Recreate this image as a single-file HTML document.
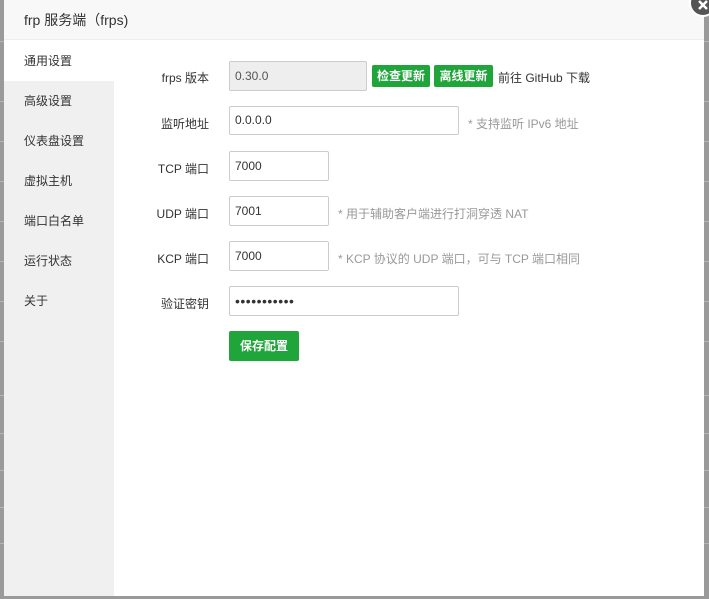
<!DOCTYPE html><html><head><meta charset="utf-8"><style>
body{margin:0;width:709px;height:599px;overflow:hidden;background:#9a9a9a;font-family:"Liberation Sans","Noto Sans CJK SC",sans-serif;font-size:12px;color:#333;position:relative}
.bgl{position:absolute;left:0;width:709px;height:1px;background:#b5b5b5}
.dlg{position:absolute;left:4px;top:0;width:700px;height:596px;background:#fff}
.hd{position:absolute;left:0;top:0;width:700px;height:40px;background:#f8f8f8;border-bottom:1px solid #eee;font-size:14px;line-height:40px;padding-left:20px;box-sizing:border-box}
.sb{position:absolute;left:0;top:41px;width:110px;height:555px;background:#f0f0f0}
.sb div{height:40px;line-height:40px;padding-left:20px;font-size:12px}
.sb div.on{background:#fff}
.ab{position:absolute}
.lbl{position:absolute;width:100px;text-align:right;left:105px}
.in{position:absolute;left:225px;border:1px solid #ccc;border-radius:2px;box-sizing:border-box;padding-left:5px;font-size:12px}
.btn{position:absolute;background:#20a53a;color:#fff;border-radius:2px;font-weight:bold;text-align:center}
.tip{position:absolute;color:#999}
.x{position:absolute;left:689px;top:-11px;width:28px;height:28px;border-radius:50%;background:#555;border:2px solid #fff;box-sizing:border-box}
</style></head><body>
<div class="bgl" style="top:41px"></div><div class="bgl" style="top:101px"></div><div class="bgl" style="top:141px"></div><div class="bgl" style="top:181px"></div><div class="bgl" style="top:221px"></div><div class="bgl" style="top:261px"></div><div class="bgl" style="top:301px"></div><div class="bgl" style="top:341px"></div><div class="bgl" style="top:395px"></div><div class="bgl" style="top:433px"></div><div class="bgl" style="top:470px"></div><div class="bgl" style="top:507px"></div><div class="bgl" style="top:543px"></div>
<div class="dlg">
<div class="hd">frp 服务端（frps)</div>
<div class="sb"><div class="on">通用设置</div><div>高级设置</div><div>仪表盘设置</div><div>虚拟主机</div><div>端口白名单</div><div>运行状态</div><div>关于</div></div>
<div class="lbl" style="top:69px">frps 版本</div>
<div class="in" style="top:61px;width:138px;height:30px;line-height:28px;background:#eee;color:#555">0.30.0</div>
<div class="btn" style="left:368px;top:65px;width:58px;height:22px;line-height:22px">检查更新</div>
<div class="btn" style="left:430px;top:65px;width:59px;height:22px;line-height:22px">离线更新</div>
<div class="ab" style="left:494px;top:69px">前往 GitHub 下载</div>
<div class="lbl" style="top:115px">监听地址</div>
<div class="in" style="top:106px;width:230px;height:29px;line-height:27px">0.0.0.0</div>
<div class="tip" style="left:464px;top:115px">* 支持监听 IPv6 地址</div>
<div class="lbl" style="top:160px">TCP 端口</div>
<div class="in" style="top:151px;width:100px;height:30px;line-height:28px">7000</div>
<div class="lbl" style="top:205px">UDP 端口</div>
<div class="in" style="top:196px;width:100px;height:30px;line-height:28px">7001</div>
<div class="tip" style="left:334px;top:205px">* 用于辅助客户端进行打洞穿透 NAT</div>
<div class="lbl" style="top:250px">KCP 端口</div>
<div class="in" style="top:241px;width:100px;height:30px;line-height:28px">7000</div>
<div class="tip" style="left:334px;top:250px">* KCP 协议的 UDP 端口，可与 TCP 端口相同</div>
<div class="lbl" style="top:295px">验证密钥</div>
<div class="in" style="top:286px;width:230px;height:30px;line-height:28px;font-size:14px;letter-spacing:0.5px">•••••••••••</div>
<div class="btn" style="left:225px;top:331px;width:70px;height:30px;line-height:30px">保存配置</div>
</div>
<div class="x"><svg width="24" height="24" style="position:absolute;left:0;top:0"><path d="M8 10L16 18M16 10L8 18" stroke="#fff" stroke-width="2.5" fill="none"/></svg></div>
</body></html>
